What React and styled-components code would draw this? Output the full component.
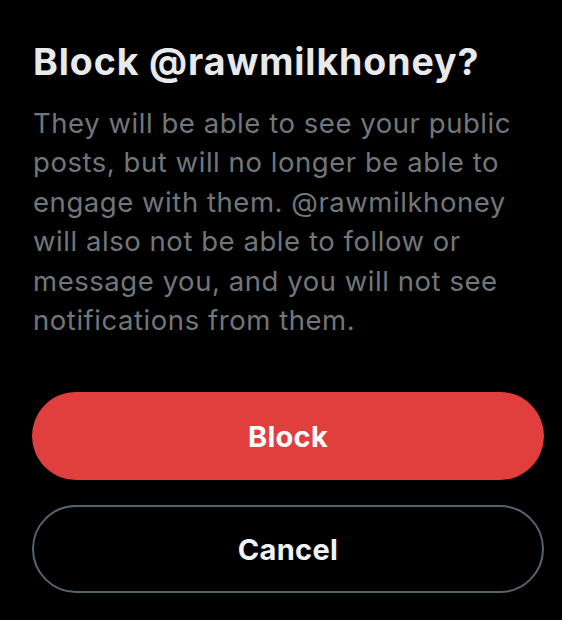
import React from 'react';
import styled, { createGlobalStyle } from 'styled-components';

const GlobalStyle = createGlobalStyle`
  html, body {
    margin: 0;
    padding: 0;
    background: #000;
  }
  body {
    font-family: Inter, Roboto, "Liberation Sans", sans-serif;
  }
`;

const Dialog = styled.div`
  width: 562px;
  height: 620px;
  box-sizing: border-box;
  background: #000;
  padding: 38px 18px 0 33px;
  display: flex;
  flex-direction: column;
`;

const Title = styled.h1`
  margin: 0;
  font-size: 37.5px;
  font-weight: 700;
  line-height: 48px;
  letter-spacing: 0.9px;
  color: #e7e9ea;
`;

const Body = styled.p`
  margin: 18px 0 0;
  font-size: 27.5px;
  line-height: 39.4px;
  letter-spacing: 0.55px;
  color: #71767b;
`;

const Actions = styled.div`
  display: flex;
  flex-direction: column;
  gap: 25px;
  margin-top: 52px;
  width: 512px;
  margin-left: -1px;
`;

const Button = styled.button`
  height: 88px;
  border-radius: 44px;
  box-sizing: border-box;
  font-family: Inter, Roboto, "Liberation Sans", sans-serif;
  font-size: 29px;
  font-weight: 700;
  letter-spacing: 0.3px;
  cursor: pointer;
  color: ${(p) => (p.$danger ? '#fff' : '#eff3f4')};
  background: ${(p) => (p.$danger ? '#e13e3e' : 'transparent')};
  border: ${(p) => (p.$danger ? 'none' : '2px solid #536471')};
`;

export default function App() {
  return (
    <Dialog>
      <GlobalStyle />
      <Title>Block @rawmilkhoney?</Title>
      <Body>
        They will be able to see your public posts, but will no longer be able to
        engage with them. @rawmilkhoney will also not be able to follow or
        message you, and you will not see notifications from them.
      </Body>
      <Actions>
        <Button $danger>Block</Button>
        <Button>Cancel</Button>
      </Actions>
    </Dialog>
  );
}
